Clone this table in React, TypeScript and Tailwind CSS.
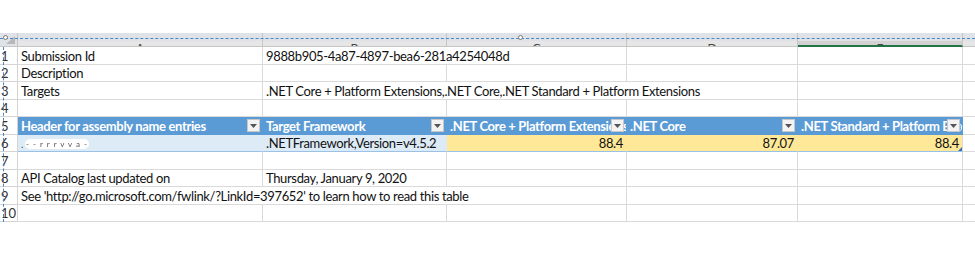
import React from "react";

const COLS = "grid-cols-[18px_245px_184px_180px_171px_165px_12px]";
const FONT = { fontFamily: "Lato, 'Open Sans', sans-serif" };

type Cell = {
  text?: React.ReactNode;
  right?: boolean; // hide right border
  cls?: string;
  align?: "left" | "right";
};

const heights = ["h-[18px]", "h-[17px]"];

function FilterBtn() {
  return (
    <div className="absolute right-[2px] top-[2px] w-[13px] h-[13px] bg-[#f3f3f3] border border-[#c8c8c8] flex items-center justify-center">
      <svg width="7" height="4" viewBox="0 0 7 4">
        <path d="M0 0 L7 0 L3.5 4 Z" fill="#555" />
      </svg>
    </div>
  );
}

function Row({ n, cells, hi }: { n: number; cells: Cell[]; hi: string }) {
  return (
    <>
      <div className={`${hi} relative border-r border-b border-[#d4d4d4] bg-white text-[13px] leading-none text-[#333] flex items-center pl-[1px] pt-[1px] overflow-hidden`}>
        {n}
      </div>
      {cells.map((c, i) => (
        <div
          key={i}
          className={`${hi} relative border-b whitespace-nowrap flex items-center pt-[2px] text-[13px] tracking-[-0.35px] text-[#111] ${
            c.right ? "border-r-0" : "border-r"
          } border-[#dadada] ${c.align === "right" ? "justify-end pr-[3px]" : "pl-[3px]"} ${c.cls ?? ""}`}
        >
          {c.text}
        </div>
      ))}
    </>
  );
}

export default function App() {
  const letters = ["A", "B", "C", "D", "E"];
  return (
    <div className="w-[975px] h-[254px] bg-white overflow-hidden" style={FONT}>
      <div className="h-[33px]" />
      {/* column header band */}
      <div className={`grid ${COLS} h-[14px] relative`}>
        <div className="bg-[#dfe3e8] border-r border-b border-[#c6c6c6] relative overflow-hidden">
          <div className="absolute right-[2px] bottom-[2px] w-0 h-0 border-l-[9px] border-l-transparent border-b-[8px] border-b-[#b9b9b9]" />
        </div>
        {letters.map((l, i) => (
          <div
            key={l}
            className={`relative overflow-hidden border-r border-[#c6c6c6] ${
              i === 4 ? "bg-[#d2d2d2] border-b-2 border-b-[#217346]" : "bg-[#e6e6e6] border-b border-b-[#c6c6c6]"
            }`}
          >
            <div className="absolute inset-x-0 top-[9px] text-center text-[12px] leading-none text-[#444]">{l}</div>
            <div className="absolute inset-x-0 top-0 h-[8px] bg-[#dfe3e8]" />
          </div>
        ))}
        <div className="bg-[#e6e6e6] border-b border-[#c6c6c6] relative">
          <div className="absolute inset-x-0 top-0 h-[8px] bg-[#dfe3e8]" />
        </div>
        {/* dashed page break line */}
        <div className="absolute left-0 right-0 top-[5px] border-t border-dashed border-[#4a86c8]" />
        <div className="absolute left-[3px] top-[2px] w-[5px] h-[5px] rounded-full border border-[#777] bg-white" />
        <div className="absolute left-[518px] top-[2px] w-[5px] h-[5px] rounded-full border border-[#777] bg-white" />
      </div>

      <div className={`grid ${COLS} relative`}>
        <Row
          n={1}
          hi={heights[0]}
          cells={[
            { text: "Submission Id" },
            { text: "9888b905-4a87-4897-bea6-281a4254048d", right: true },
            {},
            {},
            {},
            { right: true },
          ]}
        />
        <Row n={2} hi={heights[1]} cells={[{ text: "Description" }, {}, {}, {}, {}, { right: true }]} />
        <Row
          n={3}
          hi={heights[0]}
          cells={[
            { text: "Targets" },
            { text: ".NET Core + Platform Extensions,.NET Core,.NET Standard + Platform Extensions", right: true },
            { right: true },
            {},
            {},
            { right: true },
          ]}
        />
        <Row n={4} hi={heights[1]} cells={[{}, {}, {}, {}, {}, { right: true }]} />
        <Row
          n={5}
          hi={heights[0]}
          cells={[
            {
              text: (
                <>
                  <span className="font-bold text-white">Header for assembly name entries</span>
                  <FilterBtn />
                </>
              ),
              cls: "bg-[#5b9bd5] !border-[#5b9bd5]",
            },
            {
              text: (
                <>
                  <span className="font-bold text-white">Target Framework</span>
                  <FilterBtn />
                </>
              ),
              cls: "bg-[#5b9bd5] !border-[#5b9bd5]",
            },
            {
              text: (
                <>
                  <span className="font-bold text-white">.NET Core + Platform Extensions</span>
                  <FilterBtn />
                </>
              ),
              cls: "bg-[#5b9bd5] !border-[#5b9bd5] overflow-hidden",
            },
            {
              text: (
                <>
                  <span className="font-bold text-white">.NET Core</span>
                  <FilterBtn />
                </>
              ),
              cls: "bg-[#5b9bd5] !border-[#5b9bd5]",
            },
            {
              text: (
                <>
                  <span className="font-bold text-white">.NET Standard + Platform Extensions</span>
                  <FilterBtn />
                </>
              ),
              cls: "bg-[#5b9bd5] !border-[#5b9bd5] overflow-hidden",
            },
            { right: true },
          ]}
        />
        <Row
          n={6}
          hi={heights[1]}
          cells={[
            {
              text: (
                <div className="relative flex items-center">
                  <span className="text-[10px] text-[#444] leading-none">.</span>
                  <div className="ml-[2px] w-[64px] h-[10px] rounded-full bg-white flex items-center justify-center">
                    <span className="text-[8px] leading-none tracking-[1px] text-[#555] blur-[0.4px]">- - r r r v v a -</span>
                  </div>
                </div>
              ),
              cls: "bg-[#ddebf7] !border-b-[#9bc2e6] border-r-[#ddebf7]",
            },
            { text: ".NETFramework,Version=v4.5.2", cls: "bg-[#ddebf7] !border-b-[#9bc2e6] border-r-[#ddebf7]" },
            { text: "88.4", align: "right", cls: "bg-[#ffe999] !border-b-[#9bc2e6] border-r-[#ffe999]" },
            { text: "87.07", align: "right", cls: "bg-[#ffe999] !border-b-[#9bc2e6] border-r-[#ffe999]" },
            {
              text: (
                <>
                  88.4
                  <div className="absolute right-0 bottom-0 w-0 h-0 border-l-[4px] border-l-transparent border-b-[4px] border-b-[#3a6fb0]" />
                </>
              ),
              align: "right",
              cls: "bg-[#ffe999] !border-b-[#9bc2e6] border-r-[#dadada]",
            },
            { right: true },
          ]}
        />
        <Row n={7} hi={heights[0]} cells={[{}, {}, {}, {}, {}, { right: true }]} />
        <Row
          n={8}
          hi={heights[1]}
          cells={[{ text: "API Catalog last updated on" }, { text: "Thursday, January 9, 2020" }, {}, {}, {}, { right: true }]}
        />
        <Row
          n={9}
          hi={heights[0]}
          cells={[
            { text: "See 'http://go.microsoft.com/fwlink/?LinkId=397652' to learn how to read this table", right: true },
            { right: true },
            {},
            {},
            {},
            { right: true },
          ]}
        />
        <Row n={10} hi={heights[1]} cells={[{}, {}, {}, {}, {}, { right: true }]} />
        {/* dashed vertical page break on row headers */}
        <div className="absolute left-[3px] top-0 bottom-0 border-l border-dashed border-[#4a86c8]" />
      </div>
    </div>
  );
}
